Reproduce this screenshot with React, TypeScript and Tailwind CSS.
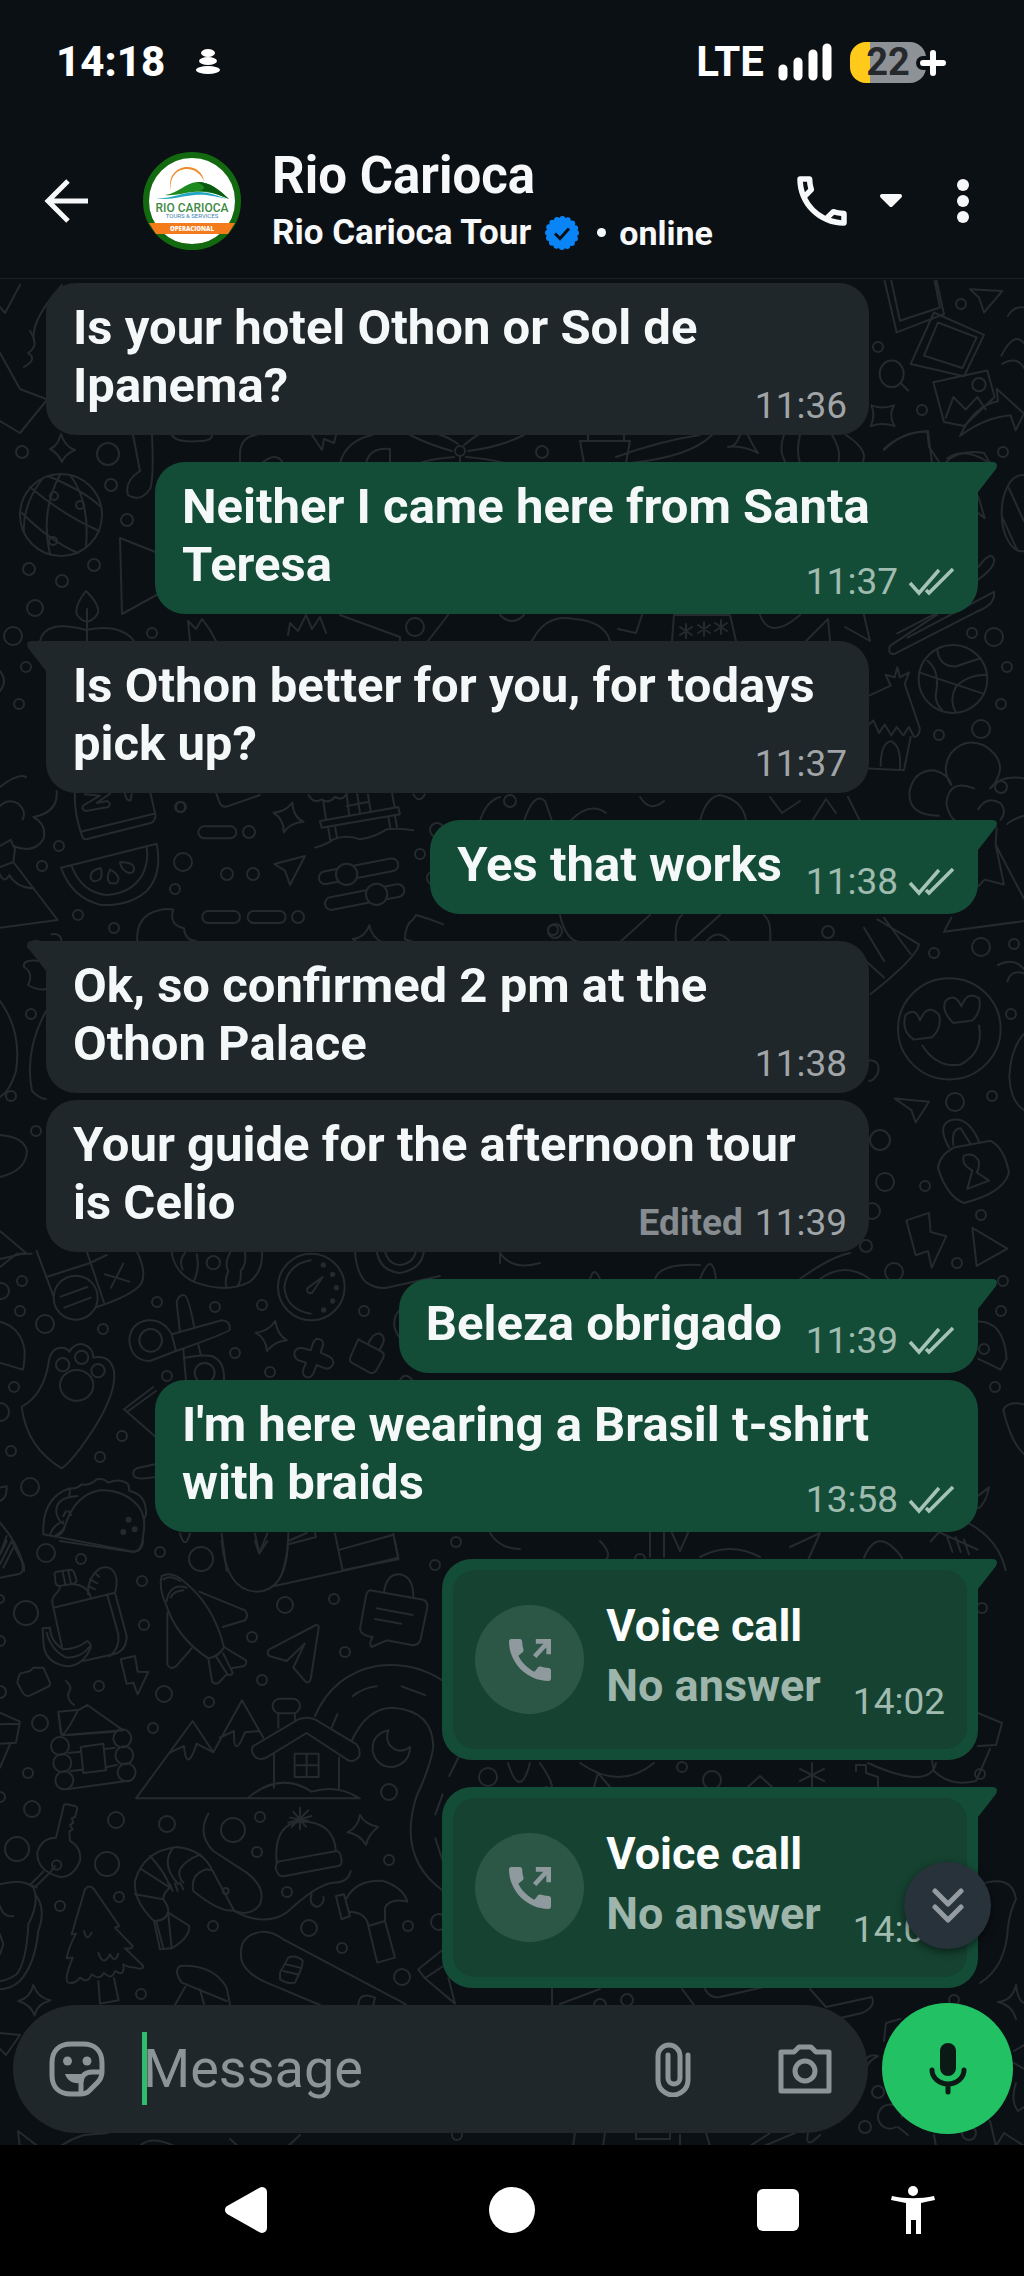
import type { ReactNode } from "react";

type Meta = { time: string; edited?: boolean };

type Message = Meta & {
  id: number;
  mine: boolean;
  kind: "text" | "call";
  text: string;
  first: boolean; // first of a run, gets the tail
};

const MESSAGES: Message[] = [
  { id: 1, mine: false, kind: "text", text: "Is your hotel Othon or Sol de Ipanema?", time: "11:36", first: false },
  { id: 2, mine: true, kind: "text", text: "Neither I came here from Santa Teresa", time: "11:37", first: true },
  { id: 3, mine: false, kind: "text", text: "Is Othon better for you, for todays pick up?", time: "11:37", first: true },
  { id: 4, mine: true, kind: "text", text: "Yes that works", time: "11:38", first: true },
  { id: 5, mine: false, kind: "text", text: "Ok, so confirmed 2 pm at the Othon Palace", time: "11:38", first: true },
  { id: 6, mine: false, kind: "text", text: "Your guide for the afternoon tour is Celio", time: "11:39", edited: true, first: false },
  { id: 7, mine: true, kind: "text", text: "Beleza obrigado", time: "11:39", first: true },
  { id: 8, mine: true, kind: "text", text: "I'm here wearing a Brasil t-shirt with braids", time: "13:58", first: false },
  { id: 9, mine: true, kind: "call", text: "Voice call", time: "14:02", first: true },
  { id: 10, mine: true, kind: "call", text: "Voice call", time: "14:03", first: true },
];

// wallpaper circles: x, y, radius
const DOTS: number[][] = [
  [181, 806, 5], [59, 845, 5], [42, 865, 5], [183, 861, 9], [227, 873, 6], [253, 873, 6], [175, 888, 5],
  [78, 914, 5], [114, 927, 5], [249, 831, 6], [298, 916, 6], [420, 853, 5], [437, 829, 7], [434, 877, 7],
  [22, 1280, 5], [1, 1290, 8], [20, 1310, 5], [45, 1323, 9], [103, 1328, 5], [157, 1301, 5], [215, 1306, 5],
  [262, 1304, 5], [364, 1310, 5], [235, 1352, 5], [167, 1375, 5], [270, 1371, 5], [14, 1386, 5], [0, 1411, 9],
  [122, 1435, 5], [100, 1456, 5], [11, 1450, 5], [30, 1486, 9], [46, 1552, 9], [81, 1558, 5], [160, 1551, 5],
  [201, 1558, 12], [435, 1564, 5], [142, 1580, 5], [26, 1612, 12], [144, 1624, 5], [285, 1604, 8], [334, 1598, 5],
  [252, 1636, 5], [345, 1651, 5], [262, 1679, 5], [99, 1685, 5], [164, 1693, 8], [209, 1701, 5], [40, 1722, 8],
  [153, 1727, 5], [28, 1772, 5], [389, 1791, 8], [32, 1808, 8], [116, 1819, 8], [167, 1823, 8], [260, 1816, 5],
  [233, 1829, 12], [257, 1851, 5], [17, 1848, 12], [107, 1863, 12], [389, 1859, 5], [119, 1896, 5], [60, 1905, 5],
  [287, 1891, 5], [213, 1925, 5], [309, 1927, 8], [408, 1925, 5], [439, 1921, 8], [342, 1947, 5], [402, 1976, 8],
  [141, 1993, 5], [0, 1640, 5], [0, 1598, 4], [0, 1796, 5], [0, 1691, 6],
  [22, 451, 6], [108, 453, 11], [111, 484, 6], [127, 519, 6], [29, 568, 6], [94, 564, 6], [62, 580, 6],
  [35, 607, 8], [13, 635, 9], [152, 632, 5], [26, 666, 5], [19, 703, 5], [415, 626, 9], [542, 451, 6], [180, 806, 5],
  [961, 303, 5], [878, 346, 5], [922, 409, 5], [1003, 451, 5], [972, 632, 5], [994, 636, 9], [1007, 666, 5],
  [1001, 703, 5], [939, 734, 5], [981, 728, 9], [934, 952, 5], [981, 946, 9], [1014, 943, 5], [955, 1101, 9],
  [992, 1095, 5], [1011, 1013, 5], [880, 1139, 10], [885, 1181, 9], [925, 1185, 5], [981, 1214, 5], [872, 1210, 8],
  [957, 1262, 5], [894, 1271, 9], [866, 1245, 6], [1003, 1280, 5], [1001, 1310, 5], [995, 1386, 5], [984, 1348, 5],
  [555, 930, 7], [510, 800, 6], [1001, 786, 6], [475, 1320, 5], [553, 929, 5], [828, 931, 6], [627, 1999, 6],
  [954, 1999, 5], [878, 2091, 6], [865, 2126, 6], [969, 2132, 7], [457, 2134, 5], [488, 1776, 9], [682, 1766, 5],
  [712, 1779, 9], [980, 1773, 5], [982, 1607, 5], [640, 1558, 5], [456, 1541, 5], [600, 2004, 6],
];

function Doodles() {
  return (
    <g className="[&_*]:[vector-effect:non-scaling-stroke]">
      {DOTS.map(([cx, cy, r], i) => (
        <circle key={i} cx={cx} cy={cy} r={r} />
      ))}

      {/* globe, candle, cards and basketball */}
      <circle cx="61" cy="514" r="41" />
      <path d="M30 486Q60 512 99 530M48 475Q84 490 100 505M22 512Q50 540 78 552M42 478Q22 505 24 532M70 474Q90 500 86 546M60 474Q40 510 50 553" />
      <circle cx="54" cy="495" r="4" />
      <circle cx="80" cy="504" r="4" />
      <circle cx="53" cy="540" r="4" />
      <path d="M20 284L5 312L0 306M62 284Q30 320 34 340M30 330Q40 345 28 352Q38 358 24 366M0 352L20 388L46 398M46 400L20 432L0 420M61 433Q65 446 75 449Q65 453 62 461Q58 452 50 448Q58 445 61 433Z" />
      <path d="M120 537L168 556M120 537L122 613L160 592M86 590Q74 605 77 614Q88 628 98 612Q100 604 86 590ZM87 608V640M40 640Q45 618 86 629M86 629Q120 622 134 640M190 640L188 620L196 628L202 618L210 629L216 640" />
      <path d="M133 434L140 470Q124 480 128 494Q140 502 150 488Q154 478 152 434M172 434Q176 442 200 440Q212 440 212 434M240 450Q242 436 256 434M262 462Q276 450 283 462M240 450V462M312 434L322 449L324 438L334 442L336 434M340 462Q346 440 372 434M366 462Q370 446 390 448V462" />
      <circle cx="460" cy="450" r="5" />
      <path d="M458 443Q448 436 440 434M464 444Q474 436 478 434M452 450Q430 444 410 434M468 450Q500 446 524 434M454 456Q430 458 420 462M466 456Q490 458 504 462M460 456V462M580 440H630L626 462M580 440L584 462M588 434V439M624 434V439M616 456Q660 440 700 434M630 462Q690 456 712 434M740 434Q736 446 728 446Q742 444 758 452Q750 440 748 434M784 434Q778 450 786 462M800 434Q796 450 800 462M846 434Q870 450 862 462M832 434Q842 450 838 462M884 448Q900 432 928 430L932 462M945 462Q958 448 984 452L990 462" />
      <path d="M288 634L290 622L298 630L306 614L312 628L320 616L326 632M340 614L400 636V641M428 640L448 614M532 640Q546 612 574 618Q604 620 610 640M500 614Q512 626 524 614M618 628L636 632L642 614M672 640L674 614H730L736 640M760 614Q770 640 800 614M806 640L828 618L830 640M845 626L870 640L864 614" />
      <path d="M680 634l12-8M680 626l12 8M686 623v14M698 632l12-8M698 624l12 8M704 621v14M715 630l12-8M715 622l12 8M721 619v14" />

      <g transform="translate(864 280) scale(.3333 .8291)">
        <path d="M62 0L98 62L240 40L218 0M82 0L108 48L228 32L212 0M140 100L210 38L360 65L300 115ZM180 90L222 50L338 68L295 105ZM208 122L370 108L392 140L300 175L240 170ZM245 165L268 140L305 155L340 140L365 155M318 10L415 12L360 38L345 20ZM432 42Q450 30 480 32M412 90Q450 60 480 75M415 100Q460 90 480 105M288 187Q330 150 402 145L398 130L480 160L455 180L440 162Q360 165 288 187ZM60 204Q120 180 190 182L195 200L225 218M250 214Q300 200 370 218" />
        <ellipse cx="83" cy="112" rx="36" ry="16" />
        <path d="M112 124L132 132M22 150Q55 155 90 150Q72 162 92 175Q55 170 20 175Q35 162 22 150Z" />
        <ellipse cx="345" cy="125" rx="20" ry="8" />
        <ellipse cx="475" cy="280" rx="62" ry="46" />
        <path d="M435 250L480 290M415 285L460 325" />
        <ellipse cx="267" cy="480" rx="103" ry="41" />
        <path d="M165 472L360 498M190 458Q230 470 215 500Q215 510 235 518M220 445Q225 465 275 465Q310 460 350 455M368 475Q310 475 275 490Q255 505 275 520" />
        <path d="M343 280L362 286L343 260M343 345Q380 325 390 335Q395 345 343 360M100 425L220 400M130 430L390 375Q395 390 343 398L90 450Q70 450 78 440L220 402M15 500L80 488L65 475L92 478L100 466L108 478L135 472L122 486L168 540Q165 550 150 550M15 535L28 530L45 545L62 535L82 548L98 538L118 548L135 538L150 550M15 588L120 590L140 550M50 585Q50 558 80 555Q112 560 108 588" />
        <path d="M225 645Q130 645 137 615Q150 590 210 590Q255 595 262 608Q230 590 260 570Q300 550 360 560Q420 575 405 595Q390 610 378 612Q410 595 480 600M330 612Q255 600 247 630Q260 660 330 655M343 637Q370 620 410 630Q430 640 410 650M480 645Q440 650 430 655" />
        <path d="M343 730L362 722L420 728L395 680L398 660M395 680L480 745M240 785L480 772M240 785L262 768M40 770L165 800Q160 815 20 860M0 780L60 820M60 768L140 812M0 818L60 840" />
        <ellipse cx="256" cy="902" rx="154" ry="61" />
        <path d="M150 915Q110 905 125 885Q155 875 168 892Q190 870 225 885Q235 900 205 912ZM268 895Q230 880 245 868Q275 858 292 875Q310 855 345 865Q355 880 325 892ZM175 922Q220 950 290 945Q360 930 345 898" />
        <path d="M92 986L195 990L155 1015L142 1000ZM222 1070Q225 1055 270 1045L380 1037Q420 1045 435 1075Q420 1100 300 1112Q250 1105 222 1070ZM255 1045Q220 1020 255 1013Q310 1005 345 1038M268 1042Q262 1022 290 1022L318 1040M310 1095L325 1073Q290 1065 300 1055Q330 1050 345 1062Q345 1072 338 1075L375 1085ZM127 1133L195 1124L200 1147L247 1152L203 1190L192 1170L155 1175ZM325 1142L430 1167L338 1188ZM402 825Q450 815 480 830M430 845Q440 830 480 835M480 908Q440 925 436 960Q440 990 480 1000M343 1255Q420 1255 428 1300L410 1313L343 1300M480 1355Q430 1350 418 1362Q440 1400 480 1415M343 1465L375 1455Q365 1475 343 1480M15 940Q50 940 42 955Q30 965 15 965" />
        <path d="M0 1540Q30 1510 80 1525Q110 1535 120 1545M200 1520L270 1490Q400 1510 425 1555M230 1510L340 1530M250 1515l15 18M275 1515l15 18M300 1518l15 18" />
      </g>

      {/* left margin beside the second group */}
      <path d="M0 786Q18 772 26 776M0 690Q8 680 0 670M0 1176Q26 1170 27 1150Q24 1136 0 1134M40 960Q22 958 24 966Q34 972 28 984Q38 990 46 988M0 1000Q22 1030 16 1070Q10 1090 0 1096M46 1010Q24 1050 32 1090Q40 1098 46 1098M0 1230L26 1252L0 1258" />
      <circle cx="31" cy="1013" r="5" />
      <circle cx="11" cy="1095" r="5" />
      <circle cx="36" cy="1130" r="5" />

      <g transform="translate(0 790) scale(.3333)">
        <rect x="595" y="106" width="114" height="36" rx="18" />
        <rect x="607" y="360" width="113" height="36" rx="18" />
        <rect x="743" y="360" width="114" height="36" rx="18" />
        <path d="M183 230L470 158Q488 250 440 300Q385 348 300 341Q215 320 183 230ZM214 223Q245 305 320 312Q395 308 428 250Q447 210 440 166" />
        <path d="M302 231Q268 238 272 262Q285 280 302 262Q308 245 302 231ZM330 236Q316 265 330 276Q355 282 356 262Q350 245 330 236ZM360 214Q365 240 390 247Q410 240 398 222Q385 212 360 214Z" />
        <path d="M877 35Q880 80 911 92Q870 95 851 124Q853 85 820 65Q858 62 877 35ZM823 219L915 195L870 282L855 239Z" />
        <path d="M412 456Q405 372 480 357Q500 352 520 356Q505 400 552 412Q555 448 588 450M155 430Q185 425 185 456M85 470Q85 448 115 450" />
        <path d="M0 410L173 387L40 213L45 175L32 147L0 165M40 213L0 228M0 250Q12 280 28 252Q50 290 98 292M0 45Q25 20 55 38Q80 60 68 85M170 0Q175 65 100 78Q142 100 130 145Q100 190 40 165" />
        <path d="M225 0Q222 60 240 115L248 140Q252 146 262 144L455 95Q470 85 465 65L450 0M242 122L462 68M255 10L300 14L252 42Q240 55 258 60L325 48Q335 38 322 30L290 36L330 8M375 8Q378 30 392 28L395 10M648 5L660 38Q668 50 682 46L780 12" />
        <rect x="955" y="222" width="242" height="38" rx="19" transform="rotate(-11 1075 242)" />
        <rect x="973" y="299" width="242" height="38" rx="19" transform="rotate(-11 1095 318)" />
        <circle cx="1040" cy="250" r="32" className="fill-[#0b1014]" />
        <circle cx="1130" cy="310" r="32" className="fill-[#0b1014]" />
        <path d="M960 90L1195 48L1200 70L965 110ZM970 30L978 86M985 112l6 36M1005 105l6 34M1165 78l6 32M1185 74l6 34M1175 0L1184 48M1040 10L1048 74M1072 10L1080 66M1104 10L1112 60M1040 45L1108 32M926 12Q940 40 965 25Q985 40 1005 18Q1030 30 1040 8M945 170Q980 160 1000 145Q1040 130 1080 145Q1120 140 1160 115Q1200 110 1240 118M1240 10Q1258 40 1275 10" />
        <path d="M1250 456L1215 445Q1215 400 1240 385L1248 372L1290 385L1330 400M1108 403Q1115 440 1150 456M1108 403Q1095 440 1058 444L1075 456" />
      </g>

      <g transform="translate(0 1250) scale(.3333)">
        <path d="M110 0L160 135M260 0L312 155M410 0Q440 60 425 95Q405 130 290 168M140 78L270 36L320 12M370 38L333 110M315 70L388 92M182 137L262 108M193 170L272 140M0 48L50 8H95" />
        <circle cx="227" cy="140" r="66" />
        <path d="M515 0Q520 60 580 92Q680 130 750 92Q790 60 786 0M555 6Q535 30 548 55M590 10Q600 50 582 90M690 6Q672 40 685 60Q672 90 680 110M735 6Q740 40 722 60Q725 90 712 106" />
        <circle cx="640" cy="35" r="20" />
        <circle cx="934" cy="108" r="100" />
        <path d="M932 28Q862 40 853 108Q858 175 932 188M968 78L922 112Q918 128 936 126ZM1065 0Q1070 70 1100 95Q1130 115 1160 110L1320 75M1130 0Q1140 60 1200 66Q1265 55 1272 0M1155 0Q1165 40 1200 42Q1240 38 1248 0" />
        <g className="fill-[#252a2e]">
          <circle cx="970" cy="42" r="5" /><circle cx="998" cy="70" r="5" /><circle cx="1009" cy="110" r="5" />
          <circle cx="998" cy="150" r="5" /><circle cx="971" cy="177" r="5" />
        </g>
        <circle cx="452" cy="268" r="34" />
        <circle cx="614" cy="366" r="30" />
        <path d="M515 250Q490 205 445 208Q390 215 388 270Q395 330 450 330L528 300ZM515 250L665 208Q690 208 690 235Q685 245 528 300M540 242L530 155Q535 130 552 132Q565 132 583 230M550 295L558 388M595 282L602 310M550 322Q600 310 635 315Q675 330 672 388" />
        <path d="M826 210Q832 252 861 268Q825 270 801 300Q798 262 767 245Q805 242 826 210ZM948 264Q970 262 970 280L962 305L990 318Q1005 328 998 342Q990 356 975 352L950 342L940 368Q932 382 918 378Q905 372 910 355L918 335L895 328Q880 318 884 302Q892 288 910 292L932 298L940 275Z" />
        <path d="M1075 265L1145 302Q1155 308 1150 320L1128 360Q1120 370 1108 364L1055 335Q1046 328 1052 316ZM1105 278Q1120 245 1140 248Q1158 258 1148 280L1138 298M1215 165Q1180 185 1183 225Q1190 260 1215 270M1200 388Q1215 360 1238 388" />
        <path d="M65 468Q130 430 145 340Q150 290 185 290Q200 290 208 302Q225 275 250 280Q280 290 280 320Q330 310 342 360Q350 420 290 520Q220 630 185 652Q80 590 65 468Z" />
        <ellipse cx="230" cy="403" rx="50" ry="46" />
        <circle cx="188" cy="341" r="20" /><circle cx="245" cy="319" r="20" /><circle cx="294" cy="359" r="20" />
        <path d="M0 212Q65 230 74 300Q74 340 68 356L0 335M460 408L372 475L470 560M385 480L468 420M465 640L410 652Q395 660 402 675Q410 688 465 678M0 750Q22 740 20 706L0 710M0 815Q50 870 72 945V960M20 855L0 910M40 890L10 950" />
        <path d="M130 850Q125 740 210 712Q230 715 245 700Q270 705 290 685Q310 680 325 695Q360 680 385 700L388 720Q440 730 438 790L432 805M210 712L208 738M232 735Q160 740 170 790Q178 815 190 818M150 852Q160 820 190 812M165 855Q190 840 195 825" />
        <path d="M130 850L400 902Q425 905 430 850Q440 800 415 765Q370 715 300 718Q225 730 195 825Q190 850 165 857M205 780l8 12M190 795l8-14" />
        <g className="fill-[#252a2e]">
          <circle cx="386" cy="806" r="6" /><circle cx="404" cy="835" r="6" /><circle cx="370" cy="843" r="6" />
        </g>
        <path d="M540 848Q555 900 570 848M665 848L680 960M765 848L778 906L802 848M865 880L948 858L945 846M865 846Q865 910 848 960M920 846L865 870M1005 848L1028 958M1020 896L1178 852M1180 848L1195 925L1028 958" />
      </g>

      <g transform="translate(0 1540) scale(.3333)">
        <path d="M665 0Q680 150 770 152Q860 150 864 0M765 0L778 38L802 0M820 136L1028 90L1195 50L1185 0M0 110L60 98Q75 90 65 60L35 0L0 70M20 0L0 40M180 0L395 32Q425 35 430 0" />
        <path d="M165 105Q160 95 170 92L210 86Q222 86 224 100L230 118Q228 128 218 128L178 135Q168 135 166 122ZM188 92l8 38M205 90l8 38M180 136Q182 145 162 165Q155 175 158 190L186 318M215 130Q260 130 272 168M160 200L345 155M264 160Q262 110 300 82Q340 68 350 115Q350 140 345 155M284 95l14 12M270 115l22 12M265 135l20 10M345 155L380 285Q380 330 340 340L250 360M322 162L355 280Q360 320 330 345" />
        <path d="M128 262L150 260Q150 300 190 325Q230 325 262 300Q275 310 272 320Q250 375 200 376Q130 365 130 300ZM140 275Q155 330 200 350Q245 350 268 318" />
        <path d="M485 105Q515 90 550 120Q640 190 672 318Q660 345 625 352Q530 290 498 190Q475 140 485 105ZM500 180Q510 125 560 140M512 170Q520 150 550 148M490 115Q510 100 540 120M598 152L735 208Q748 222 735 238L668 258M502 215V370Q510 388 528 376L575 322M672 318L738 358Q742 370 730 376L695 382M625 352L636 420Q642 432 655 426L680 400M648 346L682 400Q695 405 698 395L670 338" />
        <path d="M808 325L948 252Q958 252 956 262L932 415Q925 430 915 420L880 380L914 308L860 360L808 345Q798 335 808 325ZM1153 150Q1160 98 1200 100Q1240 108 1240 165M1110 148L1270 176Q1285 185 1282 200L1262 295Q1255 315 1235 312L1160 298L1115 318Q1105 310 1118 288Q1085 285 1080 265L1098 165Q1102 150 1110 148ZM1130 202L1238 222M1125 234L1204 248" />
        <path d="M362 355L405 345L413 392L445 393L413 460L400 425L380 428ZM55 410L60 398L90 390L100 380L130 380L150 425Q152 435 142 438L90 464Q78 468 70 458L52 425ZM198 420Q220 440 205 455Q200 475 222 492M175 512L238 506L262 492L370 568L185 583ZM182 575L175 512M185 583Q200 575 232 512" />
        <circle cx="180" cy="615" r="27" /><circle cx="187" cy="666" r="27" /><circle cx="193" cy="718" r="27" />
        <circle cx="367" cy="592" r="27" /><circle cx="373" cy="643" r="27" /><circle cx="380" cy="694" r="27" />
        <path d="M205 582L340 572M205 636L242 632M212 690L246 686M315 624L345 620M320 678L350 672M200 745L380 720M242 618L310 608L318 688L250 696Z" />
        <path d="M408 772L578 540L640 634L726 478L790 590M408 772H1080M510 635L552 615Q560 700 590 608L636 632M660 590L702 570Q700 660 735 574L780 570M745 770Q840 690 935 752Q1010 730 1075 770M822 640V740M1017 650V742M835 520V560M885 520V540" />
        <rect x="818" y="473" width="82" height="44" rx="22" />
        <path d="M760 615L895 535Q920 525 945 535L1070 610Q1082 625 1078 645Q1065 665 1045 658L920 576L795 652Q770 660 760 640Q752 625 760 615Z" />
        <path d="M884 638H956V708H884ZM920 638V708M884 673H956M945 525Q1000 400 1130 375Q1240 360 1330 420M1055 600Q1100 500 1180 500Q1300 510 1300 620Q1290 680 1250 765Q1190 950 1330 1050M1058 466Q1090 440 1130 436M1205 436L1275 462M995 560L1012 520M1380 640L1348 705M1328 760L1306 820M1306 892L1330 965" />
        <path d="M1165 568Q1115 580 1118 630Q1130 680 1180 678Q1230 665 1230 618Q1200 640 1175 618Q1155 600 1165 568ZM1080 822Q1095 850 1135 858Q1105 880 1098 912Q1080 880 1042 874Q1075 860 1080 822ZM0 515L60 542L48 605L0 608M0 550L58 548M30 610L0 680" />
        <path d="M190 800Q190 788 200 790L225 795Q235 798 230 810L225 828L215 832L220 845L210 852L218 865L208 872L210 900Q245 920 240 960Q220 1010 180 1008Q110 990 112 935Q125 890 168 890ZM92 1030L130 992M105 1038L150 995L165 975M88 1030L110 1040" />
        <circle cx="170" cy="972" r="14" />
        <path d="M0 1030Q70 1010 100 1040Q120 1080 85 1150Q80 1260 50 1300Q20 1320 0 1320M105 1060Q140 1100 115 1170Q105 1270 60 1320Q30 1345 0 1345M0 1095Q10 1130 40 1125M0 1180L10 1210L0 1240" />
        <path d="M255 1045Q268 1028 282 1045L358 1155L345 1160L398 1215Q398 1225 375 1222L430 1275Q430 1288 405 1280Q385 1280 370 1270Q375 1310 345 1290Q335 1320 312 1295Q300 1320 275 1300Q265 1330 240 1310Q225 1330 205 1325Q190 1320 218 1250L200 1252Q205 1220 228 1178L215 1180ZM252 1170Q260 1205 275 1175M295 1235Q310 1280 330 1240Q345 1270 355 1238M295 1320L300 1388L356 1378L342 1312" />
        <path d="M625 818Q590 880 640 930L740 995Q800 1040 780 1090Q750 1130 700 1108Q660 1115 580 1050Q570 1000 620 985L635 988M480 1225L462 1140Q400 1080 405 1020Q430 930 530 918Q600 925 630 975L700 1105M505 1115L568 1155Q570 1190 515 1222L480 1225M470 1145L490 1222M505 1120L515 1222M462 1140Q500 1140 505 1110Q505 1095 490 1075L405 1060M490 1075Q490 1055 510 1040L425 985M510 1040Q500 1000 450 945M535 1030Q480 970 520 920M550 1025Q510 980 600 940M510 1030l8 20M525 1028l8 22M540 1025l10 20" />
        <circle cx="677" cy="1050" r="9" />
        <path d="M700 1108Q790 1160 860 1115Q950 1030 1000 1025Q1045 1025 1052 990M935 1060Q925 1090 950 1098Q975 1090 970 1068M830 965Q820 850 900 842Q1000 840 1008 930M835 962L1010 930Q1022 930 1025 960Q1025 975 1010 976L850 1006Q835 1008 828 985Q825 970 835 962ZM870 830l55 10M880 812l38 45M900 800v65M925 808l-50 50M865 845l70-20" />
        <path d="M1008 1065L1032 1060L1050 1125L1025 1135ZM1040 1072Q1070 1015 1150 1020Q1210 1040 1222 1082Q1170 1070 1155 1100L1155 1140L1105 1155Q1100 1115 1050 1112M1105 1155L1132 1265L1185 1250L1155 1140" />
        <path d="M725 1260Q710 1180 790 1172Q820 1172 850 1195L1180 1370Q1210 1385 1218 1392M725 1260Q740 1300 800 1325L960 1392M840 1295L865 1250Q885 1240 908 1258Q910 1275 885 1325Q865 1330 840 1315ZM850 1290L892 1300M858 1270L900 1280M1075 1390Q1080 1350 1125 1370L1120 1392M545 1325Q520 1290 540 1275Q640 1270 680 1340L690 1390M545 1325L680 1380M560 1330L525 1392M600 1345L612 1390M1255 1285L1330 1225M1255 1285L1275 1312L1330 1275M1275 1312L1365 1388L1345 1310" />
        <path d="M100 1332Q112 1370 152 1378Q110 1390 104 1424Q92 1390 55 1380Q92 1370 100 1332Z" />
      </g>

      {/* pot and pear on the right margin */}
      <path d="M978 1712L1002 1722L996 1744L978 1745M990 1748L976 1780Q950 1786 934 1770L932 1760M978 1884Q1012 1872 1016 1898Q1010 1910 1008 1926Q1006 1966 980 1982" />

      {/* gaps between bubbles and around the composer */}
      <path d="M560 914Q566 940 580 941M620 941L650 914M676 941Q674 920 682 914M770 941Q772 920 764 914M690 941L720 914M706 941Q718 926 730 941M500 1252Q512 1270 540 1262M500 1252V1262M655 1278Q660 1262 700 1264M700 1278Q712 1248 716 1278M800 1278Q830 1256 850 1252M820 1278Q845 1260 870 1278M600 1278Q594 1264 590 1278" />
      <path d="M480 820Q486 800 500 796M524 820Q534 790 545 800L552 820M570 820Q590 800 606 812M640 796Q650 812 664 800M700 820Q706 796 720 794Q744 800 746 820M770 796L782 812L800 800M812 820L826 798L836 812M848 796L860 820" />
      <path d="M490 1532Q500 1548 520 1548M600 1540Q612 1552 606 1559M650 1532V1556M664 1532V1556M672 1532L680 1550L688 1532M700 1556Q730 1540 760 1556M790 1546L820 1532L808 1559M508 1762Q520 1800 530 1762M540 1762Q560 1792 546 1786M580 1762Q620 1790 654 1762M594 1786L598 1772L610 1786M748 1786L760 1775L772 1786M800 1768l24 12M800 1780l24-12M812 1762v24M856 1770v-6h10v8l12 4v10M868 1762Q930 1790 936 1762" />
      <path d="M0 2032L20 2034L6 2054L0 2048M58 2147Q70 2138 84 2134L108 2132M20 2147L18 2130L40 2147M138 2147Q150 2132 178 2147M230 2138L240 2147M300 2134L286 2147M552 1988L552 2003M600 1988L560 2003M682 1988L694 2004M705 1988Q710 1998 720 1996L764 1986M810 1988L826 2006L872 1996Q876 2006 862 2012L836 2018M884 2040L886 2022L900 2018M864 2062Q868 2052 878 2055Q868 2060 866 2068" />
      <path d="M573 2145L575 2132M603 2145L605 2132M636 2132V2138H670V2132M680 2145V2134M710 2145L706 2132M750 2145L770 2132M764 2145L795 2132M808 2132Q804 2150 820 2134M896 2126a12 12 0 1 1 6-10M898 2126L908 2134M936 2145L934 2134M990 2120L996 2145L1004 2132L1024 2145M1014 2050L1024 2044M1014 2062L1024 2068M1016 2082Q1010 2100 1018 2110L1024 2106M1016 1984Q1018 2000 1024 2002M1016 1984Q1012 2000 998 2001Q1012 2004 1016 2018" />
    </g>
  );
}

function Wallpaper() {
  return (
    <svg
      className="absolute inset-0 h-full w-full"
      viewBox="0 278 1024 1867"
      preserveAspectRatio="xMidYMin slice"
      fill="none"
      stroke="#252a2e"
      strokeWidth="2"
      strokeLinecap="round"
      strokeLinejoin="round"
      aria-hidden="true"
    >
      <Doodles />
    </svg>
  );
}

function StatusBar() {
  return (
    <div className="flex h-[124px] items-center justify-between pr-[98px] pl-[56px] text-white">
      <div className="flex items-center gap-[30px]">
        <span className="text-[42px] leading-[52px] font-extrabold">14:18</span>
        <svg width="26" height="26" viewBox="0 0 26 26" fill="currentColor" aria-hidden="true">
          <ellipse cx="13" cy="4" rx="7" ry="4" />
          <ellipse cx="13" cy="12" rx="9" ry="4" />
          <ellipse cx="13" cy="21" rx="12" ry="4" />
        </svg>
      </div>
      <div className="flex items-center">
        <span className="text-[42px] leading-[52px] font-bold">LTE</span>
        <svg className="ml-[14px]" width="54" height="38" viewBox="0 0 54 38" stroke="currentColor" strokeWidth="9" strokeLinecap="round" aria-hidden="true">
          <path d="M5 26V33M20 19V33M35 11V33M49 5V33" />
        </svg>
        <div className="relative ml-[18px] flex h-[41px] w-[76px] items-center justify-center rounded-[16px] bg-linear-[90deg,#ffca1a_20px,#8e9296_20px] text-[38px] leading-[41px] font-bold text-[#26292b]">
          22
          <svg className="absolute top-[2px] left-[64px]" width="38" height="38" viewBox="0 0 38 38" strokeLinecap="round" aria-hidden="true">
            <path d="M9 19H29M19 9V29" stroke="#0b1014" strokeWidth="14" />
            <path d="M9 19H29M19 9V29" stroke="#fff" strokeWidth="6" />
          </svg>
        </div>
      </div>
    </div>
  );
}

function Avatar() {
  return (
    <svg width="98" height="98" viewBox="0 0 98 98" role="img" aria-label="Rio Carioca Tours & Services">
      <circle cx="49" cy="49" r="46" fill="#fff" stroke="#13690f" strokeWidth="6" />
      <path d="M28 39C24 24 34 15 44 15c9 0 16 6 17 14-3-7-9-12-17-12-11 0-18 9-16 22z" fill="#ee8a2c" />
      <path d="M22 43C36 41 42 31 54 30c14 0 22 8 32 17-14-6-22-8-36-7-10 1-18 4-28 3z" fill="#1d8a1f" />
      <path d="M54 30c14 0 22 8 32 17-12-5-18-8-30-8 8-2 6-5-2-9z" fill="#0b5a12" />
      <path d="M12 46c16 2 28-7 44-6 10 0 20 4 28 7-14-3-22-5-32-4-14 1-26 6-40 3z" fill="#23a5c4" />
      <text x="49" y="60" textAnchor="middle" fontSize="12" fontWeight="500" fill="#3f8a45" fontFamily="Roboto, sans-serif">
        RIO CARIOCA
      </text>
      <text x="49" y="66" textAnchor="middle" fontSize="6" fill="#3b7fae" fontFamily="Roboto, sans-serif">
        TOURS &amp; SERVICES
      </text>
      <path d="M6 71h86l-7 11H13z" fill="#f47b1c" />
      <text x="49" y="79" textAnchor="middle" fontSize="6" fontWeight="800" fill="#fff" fontFamily="'Open Sans', sans-serif">
        OPERACIONAL
      </text>
    </svg>
  );
}

function VerifiedBadge() {
  return (
    <svg width="36" height="36" viewBox="0 0 36 36" fill="none" aria-label="Verified" role="img">
      <circle cx="18" cy="18" r="15" fill="#0a85f7" />
      <circle cx="18" cy="18" r="14" stroke="#0a85f7" strokeWidth="6" strokeLinecap="round" strokeDasharray="0 5.498" />
      <path d="M11 18.500l5 5 9-10" stroke="#0b1014" strokeWidth="3" />
    </svg>
  );
}

function ChatHeader() {
  return (
    <header className="flex h-[154px] items-center pr-[45px] pl-[37px] text-[#f7f8fa]">
      <button type="button" aria-label="Back" className="flex size-[60px] items-center justify-center">
        <svg width="46" height="46" viewBox="0 0 46 46" fill="none" stroke="currentColor" strokeWidth="5" aria-hidden="true">
          <path d="M44 23H5M24 3L4 23l20 20" />
        </svg>
      </button>
      <div className="ml-[46px] shrink-0">
        <Avatar />
      </div>
      <div className="ml-[31px] min-w-0 flex-1">
        <h1 className="text-[51px] leading-[60px] font-bold">Rio Carioca</h1>
        <p className="mt-[3px] flex items-center text-[35px] leading-[48px] font-bold whitespace-nowrap">
          <span className="mr-[13px]">Rio Carioca Tour</span>
          <VerifiedBadge />
          <span className="mr-[13px] ml-[17px] size-[9px] rounded-full bg-current" />
          <span className="text-[34px]">online</span>
        </p>
      </div>
      <button type="button" aria-label="Call" className="flex items-center gap-[24px]">
        <svg width="66" height="66" viewBox="0 0 24 24" fill="currentColor" aria-hidden="true">
          <path d="M6.540 5c.06.89.21 1.76.45 2.590l-1.200 1.200c-.41-1.200-.67-2.470-.76-3.790h1.510m9.860 12.020c.85.24 1.720.39 2.600.45v1.490c-1.320-.09-2.590-.35-3.800-.75l1.200-1.190M7.500 3H4c-.55 0-1 .45-1 1 0 9.390 7.610 17 17 17 .55 0 1-.45 1-1v-3.490c0-.55-.45-1-1-1-1.240 0-2.450-.2-3.570-.57a.84.84 0 00-.31-.05c-.26 0-.51.1-.71.29l-2.200 2.200a15.149 15.149 0 01-6.590-6.590l2.200-2.200c.28-.28.36-.67.25-1.020A11.360 11.360 0 018.500 4c0-.55-.45-1-1-1z" />
        </svg>
        <svg width="24" height="16" viewBox="0 0 24 16" fill="currentColor" stroke="currentColor" strokeWidth="4" strokeLinejoin="round" aria-hidden="true">
          <path d="M3 3h18l-9 9z" />
        </svg>
      </button>
      <button type="button" aria-label="More options" className="ml-[44px] flex w-[32px] justify-center">
        <svg width="12" height="46" viewBox="0 0 12 46" fill="currentColor" aria-hidden="true">
          <circle cx="6" cy="7" r="6" />
          <circle cx="6" cy="23" r="6" />
          <circle cx="6" cy="39" r="6" />
        </svg>
      </button>
    </header>
  );
}

function Ticks() {
  return (
    <svg className="ml-[10px] inline-block" width="46" height="30" viewBox="0 0 46 30" fill="none" stroke="#a5c3b6" strokeWidth="3.500" aria-label="Delivered" role="img">
      <path d="M2 16L11 26L31 3M18 23L21 26L45 2" />
    </svg>
  );
}

function Bubble({ mine, tail, children }: { mine: boolean; tail: boolean; children: ReactNode }) {
  const side = mine ? "self-end bg-[#144d37]" : "self-start bg-[#1f272a]";
  const corner = tail ? (mine ? "rounded-tr-none" : "rounded-tl-none") : "";

  return (
    <div className={`relative max-w-[calc(100%-109px)] rounded-[30px] ${side} ${corner}`}>
      {tail && (
        <svg
          className={mine ? "absolute top-0 left-full" : "absolute top-0 right-full -scale-x-100"}
          width="20"
          height="30"
          viewBox="0 0 20 30"
          fill={mine ? "#144d37" : "#1f272a"}
          aria-hidden="true"
        >
          <path d="M0 0H14Q21 0 18 7L0 30Z" />
        </svg>
      )}
      {children}
    </div>
  );
}

function TextMessage({ message }: { message: Message }) {
  const { mine, text, time, edited } = message;

  return (
    <div className="pt-4 pr-[32px] pb-5 pl-[27px] text-[49px] leading-[58px] font-bold text-[#f5f8f8]">
      {text}
      <span
        className={
          mine
            ? "float-right mt-[27px] -mr-[8px] ml-[24px] flex items-center text-[37px] leading-[38px] font-normal text-[#a0bbaf]"
            : "float-right mt-[30px] -mr-[10px] ml-[24px] text-[37px] leading-[38px] font-normal text-[#a1a5a7]"
        }
      >
        {edited && <span className="mr-[12px] font-bold text-[#868c8f]">Edited</span>}
        <time>{time}</time>
        {mine && <Ticks />}
      </span>
    </div>
  );
}

function CallMessage({ message }: { message: Message }) {
  return (
    <div className="p-[11px]">
      <div className="flex h-[179px] items-center rounded-[22px] bg-[#154231] pr-[22px] pl-[22px]">
        <div className="flex size-[109px] shrink-0 items-center justify-center rounded-full bg-[#2c5747]">
          <svg width="56" height="56" viewBox="0 0 24 24" fill="#8e9a9e" aria-hidden="true">
            <path d="M20.010 15.380c-1.230 0-2.420-.2-3.530-.56-.35-.12-.74-.03-1.010.24l-1.570 1.970c-2.830-1.350-5.480-3.900-6.890-6.830l1.950-1.660c.27-.28.35-.67.24-1.020-.37-1.110-.56-2.300-.56-3.530 0-.54-.45-.99-.99-.99H4.190C3.650 3 3 3.240 3 3.990 3 13.280 10.730 21 20.010 21c.71 0 .99-.63.99-1.180v-3.450c0-.54-.45-.99-.99-.99z" />
            <path d="M14 10.500L20 4M14.500 4H20V9.500" fill="none" stroke="#8e9a9e" strokeWidth="2" />
          </svg>
        </div>
        <div className="ml-[22px] pb-[8px] text-[45px] leading-[60px] font-bold whitespace-nowrap">
          <p className="text-[#fbfdfd]">{message.text}</p>
          <p className="text-[#9db5aa]">No answer</p>
        </div>
        <time className="ml-[32px] pt-[85px] text-[37px] leading-[38px] text-[#a0bbaf]">{message.time}</time>
      </div>
    </div>
  );
}

function Composer() {
  return (
    <form className="relative flex items-center gap-[14px] pr-[11px] pb-[11px] pl-[13px]">
      <div className="flex h-[128px] min-w-0 flex-1 items-center rounded-full bg-[#1f272a] pr-[35px] pl-[36px] text-[#8b9497]">
        <button type="button" aria-label="Stickers" className="shrink-0">
          <svg width="56" height="56" viewBox="0 0 56 56" fill="none" stroke="currentColor" strokeWidth="5" strokeLinejoin="round" aria-hidden="true">
            <path d="M22 3h12c12 0 19 7 19 19v9c0 5-2 8-5 11l-8 8c-2 2-5 3-9 3h-9C10 53 3 46 3 34V22C3 10 10 3 22 3z" />
            <path d="M52 31h-9c-7 0-11 4-11 11v10" />
            <circle cx="18.500" cy="20" r="4.500" fill="currentColor" stroke="none" />
            <circle cx="38" cy="20" r="4.500" fill="currentColor" stroke="none" />
            <path d="M16 33h18l-3 9c-8 1-13-3-15-9z" fill="currentColor" stroke="none" />
          </svg>
        </button>
        <span className="ml-[37px] h-[73px] w-[5px] shrink-0 bg-[#2dbd6b]" />
        <input
          type="text"
          aria-label="Message"
          placeholder="Message"
          className="-ml-1 h-[80px] min-w-0 flex-1 bg-transparent text-[54px] text-[#f5f8f8] outline-none placeholder:text-[#8b9497]"
        />
        <button type="button" aria-label="Attach" className="shrink-0">
          <svg width="36" height="56" viewBox="0 0 36 56" fill="none" stroke="currentColor" strokeWidth="5" strokeLinecap="round" aria-hidden="true">
            <path d="M33 14v25a15 15 0 0 1-30 0V15a11 11 0 0 1 22 0v22a6 6 0 0 1-12 0V14" />
          </svg>
        </button>
        <button type="button" aria-label="Camera" className="ml-[86px] shrink-0">
          <svg width="56" height="52" viewBox="0 0 56 52" fill="none" stroke="currentColor" strokeWidth="5" strokeLinejoin="round" aria-hidden="true">
            <path d="M4 9h13l5-5h12l5 5h13v39H4z" />
            <circle cx="28" cy="28" r="10" />
          </svg>
        </button>
      </div>
      <button type="button" aria-label="Record voice message" className="flex size-[131px] shrink-0 items-center justify-center rounded-full bg-[#22c164]">
        <svg width="40" height="54" viewBox="0 0 40 54" fill="none" stroke="#0b1a14" strokeWidth="5" strokeLinecap="round" aria-hidden="true">
          <rect x="12" y="1" width="16" height="33" rx="8" fill="#0b1a14" stroke="none" />
          <path d="M4 28a16 14 0 0 0 32 0M20 43v7" />
        </svg>
      </button>
    </form>
  );
}

function NavigationBar() {
  return (
    <nav className="grid h-[131px] grid-cols-[1fr_266px_266px_135px_111px] items-center bg-black pb-[2px] text-white">
      <button type="button" aria-label="Back" className="-mr-[21px] justify-self-end">
        <svg width="42" height="48" viewBox="0 0 42 48" fill="currentColor" stroke="currentColor" strokeWidth="10" strokeLinejoin="round" aria-hidden="true">
          <path d="M37 6v36L5 24z" />
        </svg>
      </button>
      <button type="button" aria-label="Home" className="-mr-[23px] size-[46px] justify-self-end rounded-full bg-white" />
      <button type="button" aria-label="Recent apps" className="-mr-[21px] size-[42px] justify-self-end rounded-[6px] bg-white" />
      <button type="button" aria-label="Accessibility" className="-mr-[22px] justify-self-end">
        <svg width="44" height="48" viewBox="0 0 44 48" fill="currentColor" aria-hidden="true">
          <circle cx="22" cy="5" r="5" />
          <path d="M1 10C14 13 30 13 43 10l1 4c-5 1-10 2-14 3v31h-5V34h-5v14h-5V17c-5-1-10-2-15-3z" />
        </svg>
      </button>
    </nav>
  );
}

export default function App() {
  return (
    <div className="flex min-h-screen flex-col bg-[#0b1014] font-[Roboto,sans-serif]">
      <StatusBar />
      <ChatHeader />
      <div className="relative flex flex-1 flex-col overflow-hidden border-t border-[#1c2226]">
        <Wallpaper />
        <main className="relative flex flex-1 flex-col px-[46px] pt-1">
          {MESSAGES.map((message, i) => (
            <div key={message.id} className={`flex flex-col ${i === 0 ? "" : message.first ? "mt-[27px]" : "mt-[7px]"}`}>
              <Bubble mine={message.mine} tail={message.first}>
                {message.kind === "call" ? <CallMessage message={message} /> : <TextMessage message={message} />}
              </Bubble>
            </div>
          ))}
          <button
            type="button"
            aria-label="Scroll to latest"
            className="absolute right-[33px] bottom-[54px] flex size-[87px] items-center justify-center rounded-full bg-[#27323a] shadow-[0_3px_8px_rgba(0,0,0,0.5)]"
          >
            <svg width="32" height="36" viewBox="0 0 32 36" fill="none" stroke="#949ca2" strokeWidth="5" strokeLinecap="round" strokeLinejoin="round" aria-hidden="true">
              <path d="M3 3l13 13L29 3M3 19l13 13 13-13" />
            </svg>
          </button>
        </main>
        <Composer />
      </div>
      <NavigationBar />
    </div>
  );
}
